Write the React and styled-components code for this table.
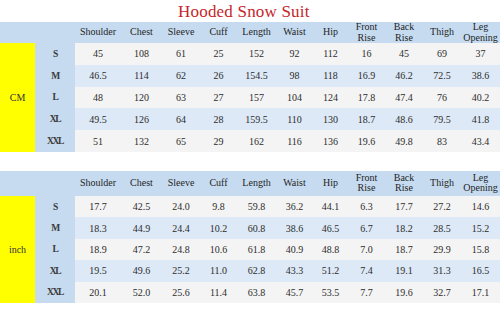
import React from "react";
import styled, { createGlobalStyle } from "styled-components";

const GlobalStyle = createGlobalStyle`
  html, body {
    margin: 0;
    padding: 0;
    background: #ffffff;
  }
  body {
    font-family: "Liberation Serif", "DejaVu Serif", serif;
  }
`;

const columns = [
  { label: ["Shoulder"], width: 46 },
  { label: ["Chest"], width: 41 },
  { label: ["Sleeve"], width: 38 },
  { label: ["Cuff"], width: 37 },
  { label: ["Length"], width: 39 },
  { label: ["Waist"], width: 37 },
  { label: ["Hip"], width: 35 },
  { label: ["Front", "Rise"], width: 37 },
  { label: ["Back", "Rise"], width: 38 },
  { label: ["Thigh"], width: 38 },
  { label: ["Leg", "Opening"], width: 39 },
];

const sizes = ["S", "M", "L", "XL", "XXL"];

const cmRows = [
  ["45", "108", "61", "25", "152", "92", "112", "16", "45", "69", "37"],
  ["46.5", "114", "62", "26", "154.5", "98", "118", "16.9", "46.2", "72.5", "38.6"],
  ["48", "120", "63", "27", "157", "104", "124", "17.8", "47.4", "76", "40.2"],
  ["49.5", "126", "64", "28", "159.5", "110", "130", "18.7", "48.6", "79.5", "41.8"],
  ["51", "132", "65", "29", "162", "116", "136", "19.6", "49.8", "83", "43.4"],
];

const inchRows = [
  ["17.7", "42.5", "24.0", "9.8", "59.8", "36.2", "44.1", "6.3", "17.7", "27.2", "14.6"],
  ["18.3", "44.9", "24.4", "10.2", "60.8", "38.6", "46.5", "6.7", "18.2", "28.5", "15.2"],
  ["18.9", "47.2", "24.8", "10.6", "61.8", "40.9", "48.8", "7.0", "18.7", "29.9", "15.8"],
  ["19.5", "49.6", "25.2", "11.0", "62.8", "43.3", "51.2", "7.4", "19.1", "31.3", "16.5"],
  ["20.1", "52.0", "25.6", "11.4", "63.8", "45.7", "53.5", "7.7", "19.6", "32.7", "17.1"],
];

const Page = styled.div`
  width: 500px;
  height: 309px;
  overflow: hidden;
  background: #ffffff;
`;

const Title = styled.h1`
  margin: 0;
  height: 22px;
  padding-left: 178px;
  font-family: "Liberation Serif", "DejaVu Serif", serif;
  font-weight: normal;
  font-size: 17px;
  letter-spacing: 0.2px;
  line-height: 23px;
  color: #c4262c;
`;

const Grid = styled.div`
  display: grid;
  grid-template-columns: 35px 40px ${columns.map((c) => c.width + "px").join(" ")};
  grid-template-rows: ${(p) => p.$head}px repeat(5, ${(p) => p.$row}px);
  margin-top: ${(p) => p.$top}px;
  background: #c6dbf0;
  font-size: 10px;
  color: #2c2c2c;
`;

const Corner = styled.div`
  grid-column: 1 / 3;
  background: #c6dbf0;
`;

const HeadCell = styled.div`
  display: flex;
  flex-direction: column;
  align-items: center;
  justify-content: center;
  line-height: 10.5px;
  color: #1f1f1f;
  white-space: nowrap;
`;

const UnitCell = styled.div`
  grid-column: 1;
  grid-row: 2 / 7;
  background: #ffff00;
  display: flex;
  align-items: center;
  justify-content: center;
  color: #333;
`;

const SizeCell = styled.div`
  grid-column: 2;
  display: flex;
  align-items: center;
  justify-content: center;
  font-size: 9.5px;
  font-weight: bold;
  letter-spacing: -1.4px;
  color: #3a3a3a;
`;

const DataCell = styled.div`
  display: flex;
  align-items: center;
  justify-content: center;
  background: ${(p) => (p.$alt ? "#dde9f6" : "#f4f4f4")};
  white-space: nowrap;
`;

function SizeTable({ unit, rows, top, head, row }) {
  return (
    <Grid $top={top} $head={head} $row={row}>
      <Corner />
      {columns.map((c) => (
        <HeadCell key={c.label.join(" ")}>
          {c.label.map((l) => (
            <span key={l}>{l}</span>
          ))}
        </HeadCell>
      ))}
      <UnitCell>{unit}</UnitCell>
      {rows.map((r, i) => (
        <React.Fragment key={sizes[i]}>
          <SizeCell style={{ gridRow: i + 2 }}>{sizes[i]}</SizeCell>
          {r.map((v, j) => (
            <DataCell key={j} $alt={i % 2 === 1}>
              {v}
            </DataCell>
          ))}
        </React.Fragment>
      ))}
    </Grid>
  );
}

export default function App() {
  return (
    <Page>
      <GlobalStyle />
      <Title>Hooded Snow Suit</Title>
      <SizeTable unit="CM" rows={cmRows} top={0} head={21} row={21.8} />
      <SizeTable unit="inch" rows={inchRows} top={19} head={25} row={21.4} />
    </Page>
  );
}
